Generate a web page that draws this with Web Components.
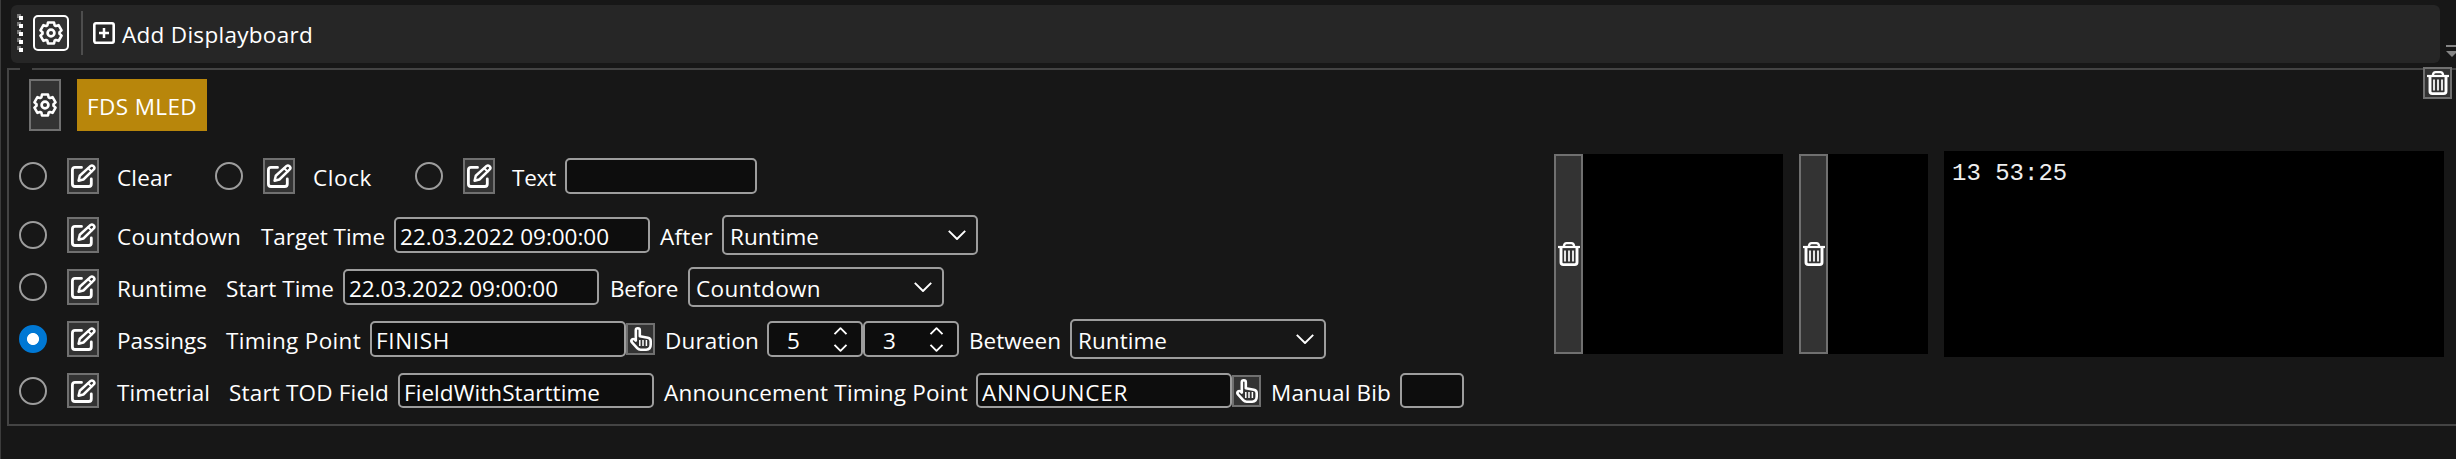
<!DOCTYPE html>
<html lang="en">
<head>
<meta charset="utf-8">
<title>Displayboard</title>
<style>
html,body{margin:0;height:100%;background:#171717;overflow:hidden}
body{font-family:"Open Sans","Noto Sans",sans-serif;font-size:22.5px;color:#fff}
</style>
</head>
<body>
<display-board-app></display-board-app>
<script>
const define = (name, html, setup) => customElements.define(name, class extends HTMLElement {
  connectedCallback() {
    if (this.shadowRoot) return;
    const t = document.createElement('template');
    t.innerHTML = html;
    this.attachShadow({mode: 'open'}).append(t.content.cloneNode(true));
    if (setup) setup(this, this.shadowRoot);
  }
});

// outline of a cog with six teeth, centred on 12,12
const cogPath = (() => {
  let d = '';
  for (let k = 0; k < 6; k++) {
    for (const [a, r] of [[-25, 8.5], [-16, 10.9], [16, 10.9], [25, 8.5]]) {
      const t = (k * 60 - 90 + a) * Math.PI / 180;
      d += (d ? 'L' : 'M') + (12 + r * Math.cos(t)).toFixed(2) + ' ' + (12 + r * Math.sin(t)).toFixed(2);
    }
  }
  return d + 'Z';
})();

const icons = {
  cog: [24, 24, `<path d="${cogPath}" stroke-width="2.6"/><circle cx="12" cy="12" r="3.4" stroke-width="2.7"/>`],
  plus: [22, 22, '<rect x="1.3" y="1.3" width="19.4" height="19.4" rx="1.6" stroke-width="2.6"/><path d="M11 6v10M6 11h10" stroke-width="2.5" stroke-linecap="butt"/>'],
  edit: [25, 24, '<path d="M10.5 3.4H4Q1.4 3.4 1.4 6v14q0 2.5 2.6 2.5h13.7q2.6 0 2.6-2.5v-5" stroke-width="2.8"/><path d="M7.6 16.7l1.2-5L19.6 1.9q1.4-1 2.9.3 1.6 1.5.5 3L12.4 15.5Z" stroke-width="2.5"/><path d="M17.2 4.2l3.4 3.4" stroke-width="2"/>'],
  hand: [22, 24, '<path d="M5.8 13.5V3.2Q5.8 1.3 7.8 1.3t2 1.9v6l8 1.6q2.9.6 2.9 3.2v3.5q0 5-4.5 5.2h-5.6q-2 0-3.4-1.6l-5-5.4q-1.6-1.8-.2-3.2 1.6-1.3 3.8 1Z" stroke-width="2.6"/><path d="M9.8 13v6M13 13v6M16.4 13v6" stroke-width="1.5" stroke-linecap="butt"/>'],
  trash: [22, 24, '<path d="M0 5h22" stroke-width="2.2" stroke-linecap="butt"/><path d="M5.8 4.6Q6.2 1.2 8.6 1.2h4.8q2.4 0 2.8 3.4" stroke-width="2.3"/><path d="M3 6v14.3q0 2.3 2.3 2.3h11.4q2.3 0 2.3-2.3V6" stroke-width="2.9"/><path d="M7 8.5v11M11 8.5v11M15 8.5v11" stroke-width="2" stroke="#e4e4e4" stroke-linecap="butt"/>'],
  chevron: [18, 10, '<path d="M.8 .8L9 9 17.2 .8" stroke-width="1.9" stroke-linecap="butt"/>'],
  up: [13, 8, '<path d="M.5 7.2L6.5 1.2l6 6" stroke-width="1.9" stroke-linecap="butt"/>'],
  down: [13, 8, '<path d="M.5 .8L6.5 6.8 12.5 .8" stroke-width="1.9" stroke-linecap="butt"/>']
};

define('board-icon', '<style>:host{display:block;flex:none}svg{display:block;overflow:visible}</style>', (el, root) => {
  const [w, h, body] = icons[el.getAttribute('name')];
  const t = document.createElement('template');
  t.innerHTML = `<svg width="${w}" height="${h}" viewBox="0 0 ${w} ${h}" fill="none" stroke="#fff" stroke-linecap="round" stroke-linejoin="round">${body}</svg>`;
  root.append(t.content);
});

// one line of text, tracked so that it takes exactly the width given in "w";
// it is led in by one pixel unless it is marked "flush"
define('fit-text', `<style>:host{display:block;flex:none;white-space:nowrap;line-height:32px;padding:4px 0 0 1px;box-sizing:border-box}
  :host([flush]){padding-left:0}span{display:inline-block}</style><span><slot></slot></span>`, (el, root) => {
  const w = +el.getAttribute('w');
  const inner = w - (el.hasAttribute('flush') ? 0 : 1);
  const span = root.querySelector('span');
  el.style.width = w + 'px';
  span.style.letterSpacing = ((inner - span.getBoundingClientRect().width) / el.textContent.length) + 'px';
});

define('icon-button', `<style>:host{display:flex;flex:none;box-sizing:border-box;width:var(--w,32px);height:var(--h,36px);
  border:2px solid #707070;background:#333;align-items:center;justify-content:center}</style><slot></slot>`);

define('radio-dot', `<style>:host{display:block;flex:none;box-sizing:border-box;width:28px;height:28px;border:2px solid #9d9d9d;border-radius:50%}
  :host([checked]){border-color:#0078d4;background:radial-gradient(circle,#fff 5.6px,#0078d4 6.4px)}</style>`);

define('text-field', `<style>:host{display:flex;flex:none;box-sizing:border-box;width:var(--w,256px);height:var(--h,36px);
  border:2px solid #9d9d9d;border-radius:5px;background:#0d0d0d;align-items:center;padding-left:4px}</style><slot></slot>`);

define('combo-box', `<style>:host{display:flex;flex:none;box-sizing:border-box;width:256px;height:40px;border:2px solid #9d9d9d;
  border-radius:5px;align-items:center;justify-content:space-between;padding:0 10px 0 6px}</style><slot></slot><board-icon name="chevron"></board-icon>`);

define('spin-box', `<style>:host{display:flex;flex:none;box-sizing:border-box;width:96px;height:36px;border:2px solid #9d9d9d;
  border-radius:5px;background:#0d0d0d;align-items:center;justify-content:space-between;padding:0 14px 0 17px}
  div{display:flex;flex-direction:column;gap:9px}</style><slot></slot><div><board-icon name="up"></board-icon><board-icon name="down"></board-icon></div>`);

define('mode-option', `<style>:host{display:flex;flex:none;align-items:center}icon-button{margin:0 17px 0 20px}</style>
  <radio-dot></radio-dot><icon-button><board-icon name="edit"></board-icon></icon-button><slot></slot>`, (el, root) => {
  if (el.hasAttribute('checked')) root.querySelector('radio-dot').setAttribute('checked', '');
});

define('option-row', '<style>:host{display:flex;align-items:center;height:40px}</style><slot></slot>');

define('tool-bar', `<style>
  :host{display:flex;box-sizing:border-box;height:58px;width:2429px;margin-left:11px;border-radius:6px;background:#262626;align-items:center;padding-left:6px}
  .grip{display:grid;grid-template-rows:repeat(5,6px);gap:2px;width:6px;height:38px}
  .grip i{background:linear-gradient(#fff,#fff) 2px 2px/4px 4px no-repeat,linear-gradient(#777,#777) 0 0/4px 4px no-repeat}
  .tool{box-sizing:border-box;width:36px;height:36px;margin-left:10px;border:2px solid #fff;border-radius:5px;background:#333;display:grid;place-items:center}
  .tool,.grip{margin-bottom:2px}
  .sep{width:2px;height:44px;background:#4d4d4d;margin:0 10px 2px 12px}
  board-icon.p{margin:0 7px 2px 0}
  fit-text{margin-bottom:2px}
  </style><div class="grip"><i></i><i></i><i></i><i></i><i></i></div><div class="tool"><board-icon name="cog"></board-icon></div>
  <div class="sep"></div><board-icon class="p" name="plus"></board-icon><fit-text w="191" flush><slot></slot></fit-text>`, (el, root) => {
  // the slotted label is measured through the light DOM of the host
  const label = root.querySelector('fit-text');
  label.textContent = el.textContent;
  const span = label.shadowRoot.querySelector('span');
  span.style.letterSpacing = '0';
  span.style.letterSpacing = ((191 - span.getBoundingClientRect().width) / label.textContent.length) + 'px';
});

define('led-preview', `<style>:host{display:flex;flex:none;height:200px}icon-button{--w:29px;--h:200px}
  div{width:var(--screen);background:#000}</style><icon-button><board-icon name="trash"></board-icon></icon-button><div></div>`);

define('board-console', `<style>:host{display:block;flex:none;box-sizing:border-box;width:500px;height:206px;background:#000;
  padding:9px 8px;font:24px/28px "Liberation Mono",monospace;color:#eee}</style><slot></slot>`);

define('board-group', `<style>
  :host{display:block;position:relative;box-sizing:border-box;height:358px;margin:5px 0 0 7px;border:2px solid #444;border-right:0}
  .notch{position:absolute;left:11px;top:-2px;width:12px;height:2px;background:#171717}
  .close{position:absolute;right:4px;top:-3px;--w:29px;--h:32px}
  .head{display:flex;padding:9px 0 0 20px;height:52px}
  .head icon-button{--h:52px}
  .badge{box-sizing:border-box;width:130px;height:52px;margin-left:16px;background:#b8860b;padding:8px 0 0 9px}
  .body{display:flex;padding-top:20px}
  .left{width:1535px;padding:5px 0 0 10px;box-sizing:content-box}
  .right{display:flex;gap:16px;align-items:center;height:206px}
  </style><div class="notch"></div><icon-button class="close"><board-icon name="trash"></board-icon></icon-button>
  <div class="head"><icon-button><board-icon name="cog"></board-icon></icon-button><div class="badge"><slot name="title"></slot></div></div>
  <div class="body"><div class="left"><slot></slot></div><div class="right"><slot name="preview"></slot></div></div>`);

define('display-board-app', `<style>
  :host{display:block;position:relative;box-sizing:border-box;height:459px;padding-top:5px;background:#171717;box-shadow:inset 1px 0 #3c3c3c;overflow:hidden}
  .more{position:absolute;left:2446px;top:45px}
  option-row:not(:last-of-type){margin-bottom:12px}
  option-row:first-of-type{margin-bottom:19px}
  .last{height:39px;--h:35px}
  .hand{--w:29px;--h:32px}
  </style>
  <tool-bar>Add Displayboard</tool-bar>
  <svg class="more" width="10" height="13"><path d="M0 0h10v2H0zM0 6h12L6 12z" fill="#858585"/></svg>
  <board-group>
    <fit-text slot="title" w="111">FDS MLED</fit-text>
    <option-row>
      <mode-option><fit-text w="56">Clear</fit-text></mode-option>
      <mode-option style="margin-left:43px"><fit-text w="60">Clock</fit-text></mode-option>
      <mode-option style="margin-left:43px"><fit-text flush w="44">Text</fit-text></mode-option>
      <text-field style="--w:192px;margin-left:9px"></text-field>
    </option-row>
    <option-row>
      <mode-option><fit-text w="125">Countdown</fit-text></mode-option>
      <fit-text flush w="124" style="margin-left:20px">Target Time</fit-text>
      <text-field style="margin-left:9px"><fit-text flush w="209">22.03.2022 09:00:00</fit-text></text-field>
      <fit-text flush w="53" style="margin-left:10px">After</fit-text>
      <combo-box style="margin-left:9px"><fit-text flush w="89">Runtime</fit-text></combo-box>
    </option-row>
    <option-row>
      <mode-option><fit-text w="91">Runtime</fit-text></mode-option>
      <fit-text flush w="108" style="margin-left:19px">Start Time</fit-text>
      <text-field style="margin-left:9px"><fit-text flush w="209">22.03.2022 09:00:00</fit-text></text-field>
      <fit-text w="69" style="margin-left:10px">Before</fit-text>
      <combo-box style="margin-left:10px"><fit-text flush w="125">Countdown</fit-text></combo-box>
    </option-row>
    <option-row>
      <mode-option checked><fit-text w="91">Passings</fit-text></mode-option>
      <fit-text flush w="135" style="margin-left:19px">Timing Point</fit-text>
      <text-field style="margin-left:9px"><fit-text flush w="74">FINISH</fit-text></text-field>
      <icon-button class="hand"><board-icon name="hand"></board-icon></icon-button>
      <fit-text w="95" style="margin-left:9px">Duration</fit-text>
      <spin-box style="margin-left:8px"><fit-text w="14">5</fit-text></spin-box>
      <spin-box><fit-text w="14">3</fit-text></spin-box>
      <fit-text w="93" style="margin-left:9px">Between</fit-text>
      <combo-box style="margin-left:9px"><fit-text flush w="89">Runtime</fit-text></combo-box>
    </option-row>
    <option-row class="last">
      <mode-option><fit-text w="94">Timetrial</fit-text></mode-option>
      <fit-text flush w="160" style="margin-left:19px">Start TOD Field</fit-text>
      <text-field style="margin-left:9px"><fit-text flush w="196">FieldWithStarttime</fit-text></text-field>
      <fit-text flush w="304" style="margin-left:10px">Announcement Timing Point</fit-text>
      <text-field style="margin-left:8px"><fit-text flush w="146">ANNOUNCER</fit-text></text-field>
      <icon-button class="hand"><board-icon name="hand"></board-icon></icon-button>
      <fit-text w="121" style="margin-left:9px">Manual Bib</fit-text>
      <text-field style="--w:64px;margin-left:9px"></text-field>
    </option-row>
    <led-preview slot="preview" style="--screen:200px"></led-preview>
    <led-preview slot="preview" style="--screen:100px"></led-preview>
    <board-console slot="preview">13 53:25</board-console>
  </board-group>`);
</script>
</body>
</html>
